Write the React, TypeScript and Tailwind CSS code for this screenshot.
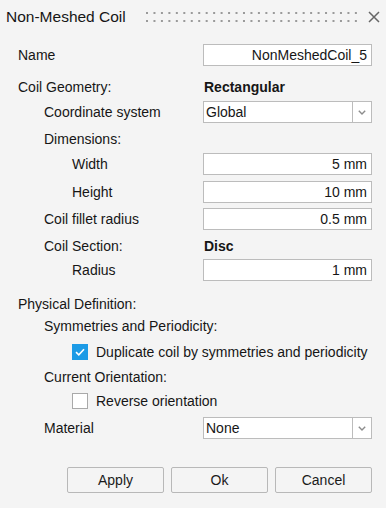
import type { ReactNode } from "react";

const FONT = { fontFamily: '"Liberation Sans", Arial, sans-serif' };

function Grip() {
  const dots = Array.from({ length: 29 }, (_, i) => 145 + i * 7.46);
  return (
    <svg width="214" height="12" viewBox="144 12 214 12" className="shrink-0">
      {dots.map((x) => (
        <g key={x} fill="#9a9a9a">
          <rect x={x} y={13} width={2} height={2} />
          <rect x={x} y={21} width={2} height={2} />
        </g>
      ))}
    </svg>
  );
}

function Row({ indent, label, mt, children }: { indent: number; label: ReactNode; mt: string; children?: ReactNode }) {
  const pad = indent === 0 ? "pl-[18px]" : indent === 1 ? "pl-[44px]" : "pl-[72px]";
  return (
    <div className={`flex items-center h-[22px] ${mt}`}>
      <div className={`${pad} w-[203px] shrink-0 whitespace-nowrap`}>{label}</div>
      {children}
    </div>
  );
}

function TextBox({ value }: { value: string }) {
  return (
    <div className="w-[169px] h-[22px] bg-white border border-[#bcbcbc] flex items-center justify-end pr-[4px]">
      {value}
    </div>
  );
}

function Select({ value }: { value: string }) {
  return (
    <div className="w-[169px] h-[22px] bg-white border border-[#bcbcbc] flex items-center">
      <span className="flex-1 pl-[2px]">{value}</span>
      <div className="w-[19px] h-full border-l border-[#bcbcbc] flex items-center justify-center">
        <svg width="8" height="5" viewBox="0 0 8 5">
          <path d="M0.8 0.8 L4 4 L7.2 0.8" fill="none" stroke="#8c8c8c" strokeWidth="1.4" />
        </svg>
      </div>
    </div>
  );
}

function Check({ checked, label, mt }: { checked: boolean; label: string; mt: string }) {
  return (
    <div className={`flex items-center h-[22px] pl-[72px] ${mt}`}>
      {checked ? (
        <div className="w-[16px] h-[16px] bg-[#1c9be6] flex items-center justify-center">
          <svg width="10" height="8" viewBox="0 0 10 8">
            <path d="M1 4.2 L3.8 6.8 L9 1.2" fill="none" stroke="#ffffff" strokeWidth="1.6" />
          </svg>
        </div>
      ) : (
        <div className="w-[16px] h-[16px] bg-white border border-[#a9a9a9]" />
      )}
      <span className="ml-[8px]">{label}</span>
    </div>
  );
}

function Button({ label }: { label: string }) {
  return (
    <button className="w-[97px] h-[26px] border border-[#b8b8b8] rounded-[2px] bg-[#f4f4f4] text-[14px] text-[#1b1b1b]">
      {label}
    </button>
  );
}

export default function App() {
  return (
    <div className="w-[386px] h-[508px] bg-[#f4f4f4] text-[14px] text-[#161616] overflow-hidden" style={FONT}>
      {/* Title bar */}
      <div className="h-[34px] flex items-center pl-[6px] pr-[4px]">
        <span className="text-[15.5px] text-[#161616] w-[139px] shrink-0">Non-Meshed Coil</span>
        <Grip />
        <div className="ml-auto w-[16px] flex items-center justify-center">
          <svg width="12" height="12" viewBox="0 0 12 12">
            <path d="M1 1 L11 11 M11 1 L1 11" stroke="#666666" strokeWidth="1.5" />
          </svg>
        </div>
      </div>

      <div className="flex flex-col">
        <Row indent={0} label="Name" mt="mt-[10px]">
          <TextBox value="NonMeshedCoil_5" />
        </Row>
        <Row indent={0} label="Coil Geometry:" mt="mt-[10px]">
          <span className="font-bold pl-[1px]">Rectangular</span>
        </Row>
        <Row indent={1} label="Coordinate system" mt="mt-[3px]">
          <Select value="Global" />
        </Row>
        <Row indent={1} label="Dimensions:" mt="mt-[5px]" />
        <Row indent={2} label="Width" mt="mt-[3px]">
          <TextBox value="5 mm" />
        </Row>
        <Row indent={2} label="Height" mt="mt-[6px]">
          <TextBox value="10 mm" />
        </Row>
        <Row indent={1} label="Coil fillet radius" mt="mt-[5px]">
          <TextBox value="0.5 mm" />
        </Row>
        <Row indent={1} label="Coil Section:" mt="mt-[5px]">
          <span className="font-bold pl-[1px]">Disc</span>
        </Row>
        <Row indent={2} label="Radius" mt="mt-[2px]">
          <TextBox value="1 mm" />
        </Row>
        <Row indent={0} label="Physical Definition:" mt="mt-[12px]" />
        <Row indent={1} label="Symmetries and Periodicity:" mt="mt-[0px]" />
        <Check checked label="Duplicate coil by symmetries and periodicity" mt="mt-[4px]" />
        <Row indent={1} label="Current Orientation:" mt="mt-[3px]" />
        <Check checked={false} label="Reverse orientation" mt="mt-[2px]" />
        <Row indent={1} label="Material" mt="mt-[5px]">
          <Select value="None" />
        </Row>

        <div className="flex gap-[7px] pl-[67px] mt-[28px]">
          <Button label="Apply" />
          <Button label="Ok" />
          <Button label="Cancel" />
        </div>
      </div>
    </div>
  );
}
